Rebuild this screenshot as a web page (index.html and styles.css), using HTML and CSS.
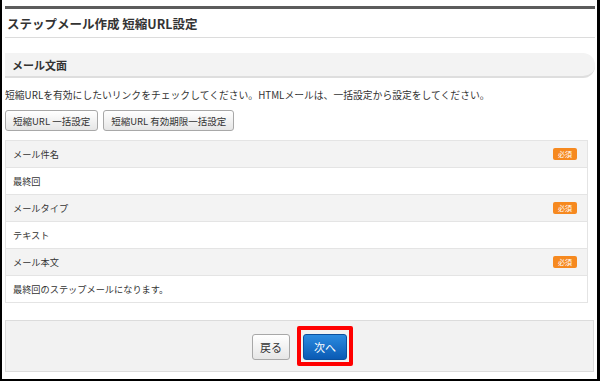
FILE: index.html
```html
<!DOCTYPE html>
<html lang="ja">
<head>
    <meta charset="UTF-8">
    <meta name="viewport" content="width=device-width, initial-scale=1.0">
    <title>ステップメール作成 短縮URL設定</title>
    <link rel="stylesheet" href="styles.css">
</head>
<body>
    <div class="frame">
        <h1 class="page-title">ステップメール作成 短縮URL設定</h1>

        <h2 class="section-title">メール文面</h2>
        <p class="note">短縮URLを有効にしたいリンクをチェックしてください。HTMLメールは、一括設定から設定をしてください。</p>
        <div class="tools">
            <button class="btn">短縮URL 一括設定</button>
            <button class="btn">短縮URL 有効期限一括設定</button>
        </div>

        <table class="fields">
            <tr class="field-head">
                <th>メール件名<span class="required">必須</span></th>
            </tr>
            <tr>
                <td>最終回</td>
            </tr>
            <tr class="field-head">
                <th>メールタイプ<span class="required">必須</span></th>
            </tr>
            <tr>
                <td>テキスト</td>
            </tr>
            <tr class="field-head">
                <th>メール本文<span class="required">必須</span></th>
            </tr>
            <tr>
                <td>最終回のステップメールになります。</td>
            </tr>
        </table>

        <div class="actions">
            <button class="btn btn-back">戻る</button>
            <span class="highlight">
                <button class="btn btn-next">次へ</button>
            </span>
        </div>
    </div>
</body>
</html>
```

FILE: styles.css
```css
body {
    margin: 0;
    font-family: "Noto Sans CJK JP", sans-serif;
    color: #333;
    background-color: #fff;
}
.frame {
    width: 600px;
    height: 381px;
    box-sizing: border-box;
    border: solid #000;
    border-width: 0 3px 2px 2px;
    padding: 6px 2px 0 3px;
}
.page-title {
    margin: 0;
    height: 28px;
    line-height: 30px;
    padding-left: 2px;
    border-top: 3px solid #5c5c5c;
    border-bottom: 1px solid #dcdcdc;
    font-size: 12.5px;
    font-weight: bold;
    color: #333;
}
.section-title {
    margin: 15px 0 0;
    height: 23px;
    line-height: 24px;
    padding-left: 7px;
    background-color: #f3f3f3;
    border-bottom: 2px solid #dedede;
    border-radius: 0 12px 12px 0;
    font-size: 11px;
    font-weight: bold;
}
.note {
    margin: 9px 0 7px;
    line-height: 16px;
    font-size: 9.8px;
}
.tools {
    display: flex;
    gap: 5px;
}
.btn {
    font-family: inherit;
    color: #333;
    background: linear-gradient(#ffffff, #e6e6e6);
    border: 1px solid #a8a8a8;
    border-radius: 3px;
    cursor: pointer;
}
.tools .btn {
    height: 21px;
    padding: 0 7px;
    font-size: 9.5px;
}
.fields {
    width: 583px;
    margin-top: 9px;
    border-collapse: collapse;
    font-size: 9.2px;
}
.fields th,
.fields td {
    height: 26px;
    padding: 0 10px 0 7px;
    border: 1px solid #e4e4e4;
    text-align: left;
    font-weight: normal;
}
.field-head th {
    background-color: #f3f3f3;
}
.required {
    float: right;
    width: 24px;
    height: 12px;
    line-height: 12px;
    margin-top: 1px;
    background-color: #f6891f;
    border-radius: 2px;
    color: #fff;
    font-size: 7px;
    text-align: center;
}
.actions {
    display: flex;
    justify-content: center;
    align-items: center;
    gap: 13px;
    height: 52px;
    margin: 17px 1px 0 0;
    padding-top: 2px;
    box-sizing: border-box;
    background-color: #f2f2f2;
    border: 1px solid #dcdcdc;
}
.actions .btn {
    height: 26px;
    font-size: 11px;
}
.btn-back {
    width: 38px;
}
.highlight {
    display: flex;
    margin: -8px -6px -6px;
    padding: 4px 2px 2px;
    border: 4px solid #f00;
    border-radius: 2px;
}
.btn-next {
    width: 44px;
    color: #fff;
    background: linear-gradient(#2b8be0, #0a5ab4);
    border-color: #0b4f9c;
}
```
